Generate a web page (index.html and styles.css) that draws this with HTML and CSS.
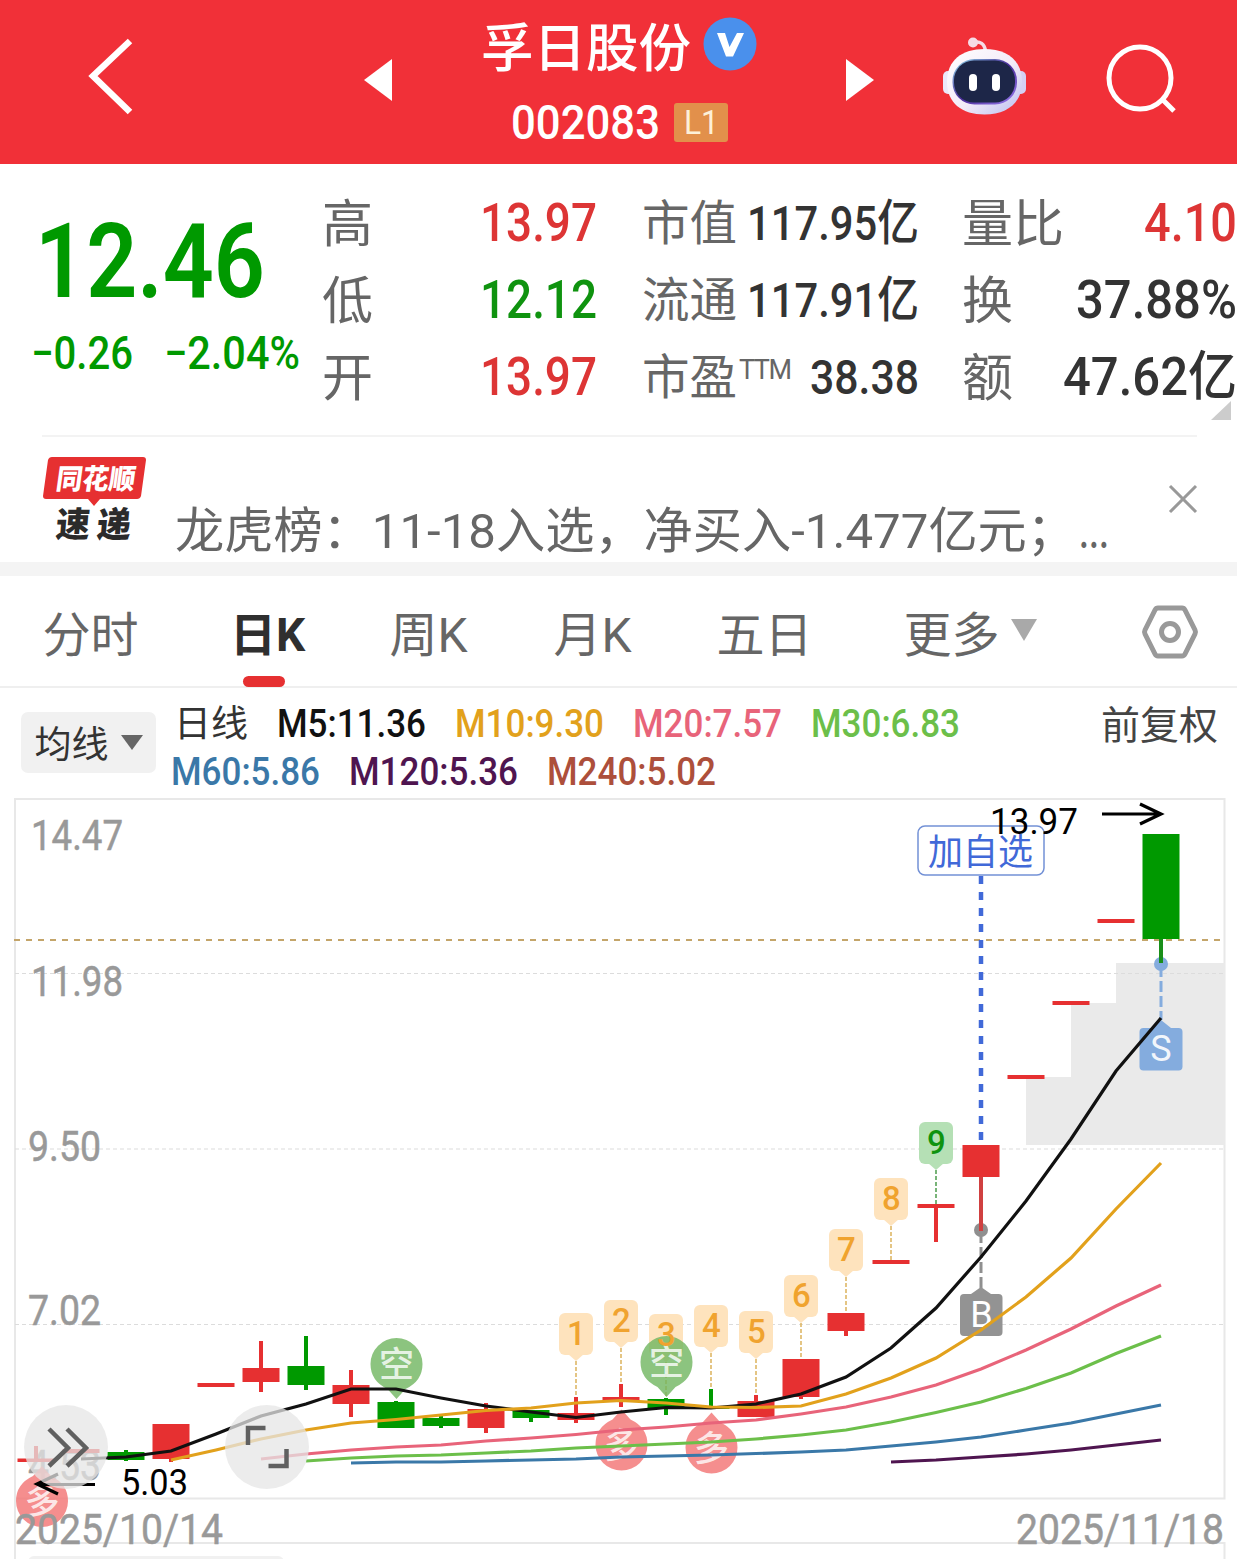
FILE: index.html
```html
<!DOCTYPE html>
<html lang="zh-CN">
<head>
  <meta charset="UTF-8" />
  <title>孚日股份 002083</title>
  <link rel="stylesheet" href="styles.css">
</head>
<body>

  <header class="topbar">
    <svg class="back" width="60" height="90" viewBox="0 0 60 90">
      <path d="M49 9 L12 44 L49 80" />
    </svg>
    <svg class="prev" width="28" height="42" viewBox="0 0 28 42"><path d="M28 0 V42 L0 21 Z" /></svg>
    <div class="stock">
      <div class="stock-name">
        <span>孚日股份</span>
        <svg width="54" height="54" viewBox="0 0 54 54">
          <circle cx="27" cy="27" r="26.500" fill="#4a90ec" />
          <path d="M14 16 H22 L26.500 30 L34 16 H41 L30 39.500 H23 Z" fill="#fff" />
        </svg>
      </div>
      <div class="stock-code">
        <span class="fit" data-w="149">002083</span>
        <span class="level"><span class="fit" data-w="35">L1</span></span>
      </div>
    </div>
    <svg class="next" width="28" height="42" viewBox="0 0 28 42"><path d="M0 0 V42 L28 21 Z" /></svg>
    <svg class="robot" width="88" height="80" viewBox="940 37 88 80">
      <defs>
        <linearGradient id="shell" x1="0" y1="0" x2="1" y2="1">
          <stop offset="0" stop-color="#fff" />
          <stop offset=".55" stop-color="#f3ebf8" />
          <stop offset="1" stop-color="#b9bdf0" />
        </linearGradient>
        <linearGradient id="rim" x1="0" y1="0" x2="1" y2="1">
          <stop offset="0" stop-color="#8fd8e8" />
          <stop offset=".5" stop-color="#4a2a9a" />
          <stop offset="1" stop-color="#9a7cf0" />
        </linearGradient>
      </defs>
      <path d="M973 42.500 Q984 40 985.500 51" fill="none" stroke="#f6dce6" stroke-width="3.500" />
      <circle cx="973" cy="42.500" r="5" fill="#f6dce6" />
      <rect x="943" y="71" width="12" height="23" rx="5" fill="#ebe8fa" />
      <rect x="1014" y="71" width="12" height="23" rx="5" fill="#d5d0f4" />
      <path d="M947 82 C947 60 962 49 984.500 49 C1007 49 1022 60 1022 82 C1022 103 1007 114.500 984.500 114.500 C962 114.500 947 103 947 82 Z" fill="url(#shell)" />
      <rect x="952.500" y="59" width="64.500" height="45.500" rx="22" fill="url(#rim)" />
      <rect x="954" y="60.500" width="61" height="42" rx="20" fill="#1d2648" />
      <rect x="969" y="74" width="8" height="17" rx="4" fill="#fff" />
      <rect x="992" y="74" width="8" height="17" rx="4" fill="#fff" />
    </svg>
    <svg class="search" width="76" height="76" viewBox="1103 40 76 76">
      <circle cx="1140" cy="78" r="31" />
      <path d="M1162 99 L1174 111" />
    </svg>
  </header>

  <section class="quote">
    <div class="price-box">
      <div class="price"><span class="fit" data-w="230">12.46</span></div>
      <div class="change"><span class="fit" data-w="102">−0.26</span><span class="fit" data-w="136">−2.04%</span></div>
    </div>
    <dl class="facts">
      <div class="fact"><dt>高</dt><dd class="up"><span class="fit" data-w="117">13.97</span></dd></div>
      <div class="fact"><dt>低</dt><dd class="down"><span class="fit" data-w="117">12.12</span></dd></div>
      <div class="fact"><dt>开</dt><dd class="up"><span class="fit" data-w="117">13.97</span></dd></div>
    </dl>
    <dl class="facts facts-mid">
      <div class="fact"><dt>市值</dt><dd><span class="fit" data-w="172">117.95亿</span></dd></div>
      <div class="fact"><dt>流通</dt><dd><span class="fit" data-w="172">117.91亿</span></dd></div>
      <div class="fact"><dt>市盈<sup>TTM</sup></dt><dd><span class="fit" data-w="109">38.38</span></dd></div>
    </dl>
    <dl class="facts facts-end">
      <div class="fact"><dt>量比</dt><dd class="up"><span class="fit" data-w="93">4.10</span></dd></div>
      <div class="fact"><dt>换</dt><dd><span class="fit" data-w="161">37.88%</span></dd></div>
      <div class="fact"><dt>额</dt><dd><span class="fit" data-w="174">47.62亿</span></dd></div>
    </dl>
    <svg class="corner" width="20" height="19" viewBox="0 0 20 19"><path d="M20 0 V19 H0 Z" /></svg>
  </section>

  <section class="news">
    <svg class="news-logo" width="104" height="90" viewBox="42 455 104 90">
      <path d="M52 457 H143 Q146 457 146 460 L141 496 Q140 499 137 499 H100 L94 506 L88 499 H46 Q43 499 43 496 L48 460 Q49 457 52 457 Z" fill="#e63031" />
      <text transform="translate(55 489) skewX(-8)" class="logo-top" textLength="79" lengthAdjust="spacingAndGlyphs">同花顺</text>
      <text transform="translate(55 537) skewX(-5)" class="logo-bottom" textLength="34" lengthAdjust="spacingAndGlyphs">速</text>
      <text transform="translate(96 537) skewX(-5)" class="logo-bottom" textLength="34" lengthAdjust="spacingAndGlyphs">递</text>
    </svg>
    <p class="news-text"><span class="fit" data-w="901">龙虎榜：11-18入选，净买入-1.477亿元；</span><span class="fit dots" data-w="30">...</span></p>
    <svg class="close" width="30" height="30" viewBox="0 0 30 30"><path d="M2 2 L28 28 M28 2 L2 28" /></svg>
  </section>

  <nav class="tabs">
    <a class="tab">分时</a>
    <a class="tab active">日K</a>
    <a class="tab">周K</a>
    <a class="tab">月K</a>
    <a class="tab">五日</a>
    <a class="tab">更多<svg width="26" height="22" viewBox="0 0 26 22"><path d="M0 0 H26 L13 22 Z" fill="#a9a9a9" /></svg></a>
    <svg class="settings" width="58" height="56" viewBox="0 0 58 56">
      <path d="M17 4 H41 Q43 4 44 6 L54 26 Q55 28 54 30 L44 50 Q43 52 41 52 H17 Q15 52 14 50 L4 30 Q3 28 4 26 L14 6 Q15 4 17 4 Z" />
      <circle cx="29" cy="28" r="8.500" />
    </svg>
  </nav>

  <section class="averages">
    <button class="picker">均线<svg width="22" height="15" viewBox="0 0 22 15"><path d="M0 0 H22 L11 15 Z" fill="#666" /></svg></button>
    <div class="legend">
      <div class="legend-row">
        <span class="period">日线</span>
        <span class="fit m5" data-w="149">M5:11.36</span>
        <span class="fit m10" data-w="149">M10:9.30</span>
        <span class="fit m20" data-w="149">M20:7.57</span>
        <span class="fit m30" data-w="149">M30:6.83</span>
      </div>
      <div class="legend-row legend-long">
        <span class="fit m60" data-w="149">M60:5.86</span>
        <span class="fit m120" data-w="169">M120:5.36</span>
        <span class="fit m240" data-w="169">M240:5.02</span>
      </div>
    </div>
    <span class="adjust">前复权</span>
  </section>

  <svg class="chart" width="1237" height="761" viewBox="0 798 1237 761">
    <!-- frame and grid -->
    <g class="frame">
      <path d="M15 1559 V799 H1224.500 V1498.500 H15 M15 1543 H1224.500 V1559" />
    </g>
    <rect x="28" y="1556" width="256" height="12" rx="6" fill="#f1f1f1" />
    <path d="M1026 1145 V1077 H1071 V1003 H1116 V963 H1225 V1145 Z" fill="#eaeaea" />
    <path class="grid" d="M15 973.500 H1224 M15 1149 H1224 M15 1324.500 H1224" />
    <path class="last" d="M14 940 H1222" />

    <!-- price axis -->
    <g class="axis">
      <text x="31" y="850" textLength="92">14.47</text>
      <text x="31" y="996" textLength="92">11.98</text>
      <text x="28" y="1161" textLength="73">9.50</text>
      <text x="28" y="1325" textLength="73">7.02</text>
      <text x="28" y="1480" textLength="73">4.53</text>
    </g>

    <g id="markers"></g>
    <g id="candles"></g>
    <g id="signals"></g>
    <g id="counts"></g>

    <!-- trade marks -->
    <path d="M981 876 V1142" stroke="#4169d8" stroke-width="4.500" stroke-dasharray="8 8" />
    <circle cx="981" cy="1230" r="7" fill="#8f8f8f" />
    <path d="M981 1177 V1231" stroke="#d04040" stroke-width="4" />
    <path d="M981 1232 V1288" stroke="#8f8f8f" stroke-width="3" stroke-dasharray="11 4" />
    <path d="M971 1294 L981 1287 L991 1294 Z" fill="#939393" />
    <rect x="960" y="1294" width="42.500" height="42" rx="4" fill="#939393" />
    <text class="mark" x="981.500" y="1327">B</text>
    <circle cx="1161" cy="964" r="7" fill="#84acde" />
    <path d="M1161 939 V963" stroke="#1a8f1a" stroke-width="4" />
    <path d="M1161 966 V1020" stroke="#84acde" stroke-width="3" stroke-dasharray="11 4" />
    <path d="M1152 1028 L1161 1020 L1171 1028 Z" fill="#84acde" />
    <rect x="1139.500" y="1028" width="43" height="42.500" rx="4" fill="#84acde" />
    <text class="mark" x="1161" y="1061" opacity=".9">S</text>

    <g id="lines"></g>

    <!-- high, low and watchlist labels -->
    <rect x="918" y="826" width="126" height="49" rx="7" fill="#fff" stroke="#7391d6" stroke-width="1.500" />
    <text class="watch" x="928" y="865" textLength="105">加自选</text>
    <text class="extreme" x="990" y="834" textLength="88">13.97</text>
    <path class="arrow" d="M1102 814 H1160 M1140 804 L1161 814 L1140 824" />
    <text class="extreme" x="121" y="1495" textLength="67">5.03</text>
    <path class="arrow" d="M95 1484.500 H37 M58 1474 L37 1484 L58 1494" />

    <!-- floating buttons -->
    <circle cx="66" cy="1447" r="42" fill="#e6e6e6" opacity=".75" />
    <path class="tool" d="M49 1429 L68 1448 L49 1466 M67 1429 L86 1448 L67 1466" />
    <circle cx="267" cy="1447" r="42" fill="#e6e6e6" opacity=".75" />
    <path class="tool" d="M265.500 1428 H248 V1445 M268.500 1466 H286.500 V1449" />

    <g class="dates">
      <text x="15" y="1544" textLength="208">2025/10/14</text>
      <text x="1016" y="1544" textLength="208">2025/11/18</text>
    </g>
  </svg>

  <script src="chart.js"></script>
</body>
</html>
```

FILE: styles.css
```css
* {
  box-sizing: border-box;
}

body {
  margin: 0;
  width: 1237px;
  height: 1559px;
  overflow: hidden;
  background: #fff;
  color: #333;
  font-family: Roboto, "Noto Sans CJK SC", sans-serif;
}

svg {
  display: block;
  flex: none;
}

.fit {
  display: inline-block;
  white-space: nowrap;
  transform-origin: 0 50%;
}

/* Top bar */
.topbar {
  display: flex;
  height: 163.500px;
  background: #f13038;
  color: #fff;
}

.back {
  margin: 32px 0 0 81px;
  fill: none;
  stroke: #fff;
  stroke-width: 6.500;
}

.prev, .next {
  fill: #fff;
  margin-top: 59px;
}

.prev {
  margin-left: 223px;
}

.stock {
  width: 454px;
  display: flex;
  flex-direction: column;
  align-items: center;
}

.stock-name {
  display: flex;
  align-items: center;
  gap: 12px;
  height: 60px;
  margin-top: 14px;
  font-size: 52.500px;
  font-weight: 500;
}

.stock-code {
  display: flex;
  align-items: center;
  gap: 14px;
  height: 60px;
  margin-top: 18px;
  padding-left: 1px;
  font-size: 49px;
  font-weight: 500;
}

.level {
  display: flex;
  align-items: center;
  justify-content: center;
  width: 54px;
  height: 39px;
  border-radius: 3px;
  background: #e2904b;
  color: #fdf0d8;
  font-size: 33px;
  font-weight: 400;
}

.robot {
  margin: 37px 0 0 66px;
}

.search {
  margin: 40px 0 0 75px;
  fill: none;
  stroke: #fff;
  stroke-width: 5;
}

/* Quote */
.quote {
  display: flex;
  position: relative;
  height: 271.500px;
  padding-top: 21px;
}

.price-box {
  width: 322px;
  color: #009900;
  font-weight: 500;
}

.price {
  height: 138px;
  padding: 8px 0 0 35px;
  line-height: 138px;
  font-size: 104px;
  font-weight: 600;
}

.change {
  display: flex;
  gap: 31px;
  padding-left: 31px;
  font-size: 46px;
  line-height: 60px;
}

.facts {
  width: 275px;
  margin: 0 45px 0 0;
}

.facts-mid {
  width: 277px;
  margin-right: 43px;
}

.facts-end {
  margin: 0;
}

.fact {
  display: flex;
  justify-content: space-between;
  height: 77px;
  line-height: 77px;
}

.fact dt {
  padding-top: 1px;
  font-size: 51px;
  color: #666;
  white-space: nowrap;
}

.fact dd {
  margin: 0;
  font-size: 53px;
  font-weight: 500;
}

.facts-mid dt {
  font-size: 47.500px;
}

.facts-mid dd {
  font-size: 49px;
}

.fact sup {
  font-size: 27px;
  line-height: 0;
  letter-spacing: -1.500px;
  margin-left: 2px;
  vertical-align: 15px;
}

.up {
  color: #dd3535;
}

.down {
  color: #0f930f;
}

.corner {
  position: absolute;
  right: 6px;
  bottom: 15px;
  fill: #ccc;
}

/* News strip */
.news {
  display: flex;
  position: relative;
  height: 140.500px;
  padding-left: 42px;
  border-bottom: 14px solid #f4f4f4;
}

.news::before {
  content: "";
  position: absolute;
  left: 42px;
  right: 40px;
  top: 0;
  height: 2px;
  background: #f3f3f3;
}

.news-logo {
  margin-top: 20px;
}

.logo-top {
  font-size: 28px;
  font-weight: 900;
  fill: #fff;
}

.logo-bottom {
  font-size: 35px;
  font-weight: 900;
  fill: #2b2b2b;
}

.news-text {
  width: 935px;
  margin: 62px 0 0 29px;
  font-size: 49px;
  line-height: 70px;
  color: #666;
  white-space: nowrap;
}

.dots {
  margin-left: 3px;
  font-weight: 500;
}

.close {
  margin: 49px 0 0 58px;
  fill: none;
  stroke: #999;
  stroke-width: 3;
}

/* Period tabs */
.tabs {
  display: flex;
  height: 112px;
  padding-left: 42px;
  border-bottom: 2px solid #efefef;
}

.tab {
  display: flex;
  flex: none;
  position: relative;
  align-items: center;
  justify-content: center;
  width: 97px;
  height: 111px;
  margin-right: 67px;
  font-size: 48px;
  color: #666;
  white-space: nowrap;
}

.tab:nth-child(2) {
  width: 75px;
  margin: 0 84px 0 24px;
}

.tab:nth-child(3), .tab:nth-child(4) {
  width: 79px;
  margin-right: 85px;
}

.tab:nth-child(5) {
  width: 97px;
  margin: 0 90px 0 -1px;
}

.tab:nth-child(6) {
  width: 134px;
  gap: 11px;
  margin-right: 104px;
}

.tab:nth-child(6) svg {
  margin-top: -2px;
}

.active {
  color: #2f2f2f;
  font-size: 46px;
  font-weight: 700;
}

.active::after {
  content: "";
  position: absolute;
  left: 13px;
  bottom: 0;
  width: 42px;
  height: 11px;
  border-radius: 6px;
  background: #e63031;
}

.settings {
  margin-top: 28px;
  fill: none;
  stroke: #999;
  stroke-width: 5;
}

/* Moving averages */
.averages {
  display: flex;
  height: 110.500px;
  padding: 0 19px 0 21px;
}

.picker {
  display: flex;
  align-items: center;
  justify-content: center;
  gap: 12px;
  width: 135px;
  height: 61px;
  margin: 24px 18px 0 0;
  padding: 0;
  border: none;
  border-radius: 7px;
  background: #f1f1f1;
  color: #333;
  font: 37px "Noto Sans CJK SC", sans-serif;
}

.legend {
  flex: 1;
  padding-top: 12px;
  font-size: 39px;
  font-weight: 500;
}

.legend-row {
  display: flex;
  gap: 29px;
  height: 48px;
  line-height: 48px;
}

.legend-long {
  margin-left: -3px;
}

.period {
  padding-top: 1px;
  font-size: 37px;
  font-weight: 400;
}

.adjust {
  margin-top: 14px;
  font-size: 39px;
  line-height: 48px;
  color: #444;
}

.m5 { color: #111; }
.m10 { color: #e2a11c; }
.m20 { color: #e8647a; }
.m30 { color: #6cbf4a; }
.m60 { color: #3a78a8; }
.m120 { color: #4f1550; }
.m240 { color: #ad4f3b; }

/* Chart */
.frame {
  fill: none;
  stroke: #e8e8e8;
  stroke-width: 2;
}

.grid {
  stroke: #dcdcdc;
  stroke-width: 1.200;
  stroke-dasharray: 4 3;
}

.last {
  stroke: #c4a56a;
  stroke-width: 1.800;
  stroke-dasharray: 6 6;
}

.axis, .dates {
  font-size: 42px;
  fill: #999;
  stroke: #999;
  stroke-width: .5;
}

.mark {
  font-size: 36px;
  fill: #fff;
  text-anchor: middle;
}

.watch {
  font-size: 36px;
  fill: #4169d8;
}

.extreme {
  font-size: 36px;
  fill: #000;
}

.arrow {
  fill: none;
  stroke: #000;
  stroke-width: 3.200;
}

.tool {
  fill: none;
  stroke: #606060;
  stroke-width: 4.500;
}

.tag {
  font-size: 33px;
  font-weight: 500;
  text-anchor: middle;
}

.signal {
  font-size: 35px;
  font-weight: 500;
  fill: #fff;
  fill-opacity: .8;
  text-anchor: middle;
}

.line {
  fill: none;
  stroke-width: 3.200;
}
```

FILE: chart.js
```javascript
const NS = 'http://www.w3.org/2000/svg';
const RED = '#e63031';
const GREEN = '#009900';
const FIRST = 36;
const STEP = 45;

// Stretch each figure to its column width
document.querySelectorAll('.fit').forEach(el => {
  const width = Number(el.dataset.w);
  const natural = el.getBoundingClientRect().width;
  el.style.transform = `scaleX(${width / natural})`;
  el.style.marginRight = `${width - natural}px`;
});

document.querySelectorAll('.chart text[textLength]').forEach(el => {
  el.setAttribute('lengthAdjust', 'spacingAndGlyphs');
});

function add(parent, name, attrs, text) {
  const el = document.createElementNS(NS, name);
  for (const key in attrs) el.setAttribute(key, attrs[key]);
  if (text) el.textContent = text;
  parent.appendChild(el);
}

// color, body top, body bottom, wick top, wick bottom
const candles = [
  [RED, 1458.5, 1462, 1446, 1461],
  [RED, 1449, 1453, 1449, 1453],
  [GREEN, 1452, 1460, 1450, 1461],
  [RED, 1424, 1459, 1424, 1462],
  [RED, 1383, 1387, 1383, 1387],
  [RED, 1368, 1382, 1341, 1392],
  [GREEN, 1366, 1385, 1336, 1390],
  [RED, 1385, 1404, 1370, 1417],
  [GREEN, 1402, 1428, 1401, 1428],
  [GREEN, 1418, 1426, 1415, 1428],
  [RED, 1409, 1428, 1403, 1433],
  [GREEN, 1410, 1418, 1410, 1422],
  [RED, 1413, 1420, 1397, 1423],
  [RED, 1397, 1401, 1384, 1407],
  [GREEN, 1399, 1408, 1398, 1415],
  [GREEN, 1406, 1409, 1389, 1408],
  [RED, 1401, 1417, 1395, 1417],
  [RED, 1359, 1397, 1359, 1399],
  [RED, 1313, 1331, 1313, 1336],
  [RED, 1260, 1264, 1260, 1264],
  [RED, 1204, 1208, 1204, 1242],
  [RED, 1145, 1177, 1145, 1229],
  [RED, 1075, 1079, 1075, 1079],
  [RED, 1001, 1005, 1001, 1005],
  [RED, 919, 923, 919, 923],
  [GREEN, 834, 939, 834, 963]
];

const candleLayer = document.getElementById('candles');
candles.forEach(([color, top, bottom, high, low], i) => {
  const x = FIRST + i * STEP;
  add(candleLayer, 'rect', { x: x - 2, y: high, width: 4, height: low - high, fill: color });
  add(candleLayer, 'rect', { x: x - 18.5, y: top, width: 37, height: bottom - top, fill: color });
});

// Nine-count tags: label, candle index, tag top, stem end
const tags = [
  ['1', 12, 1313, 1397], ['2', 13, 1300, 1384], ['3', 14, 1314, 1398],
  ['4', 15, 1305, 1389], ['5', 16, 1311, 1395], ['6', 17, 1275, 1359],
  ['7', 18, 1229, 1313], ['8', 19, 1178, 1261], ['9', 20, 1122, 1205]
];
const markerLayer = document.getElementById('markers');
const countLayer = document.getElementById('counts');
tags.forEach(([label, i, y, end]) => {
  const x = FIRST + i * STEP;
  const nine = label === '9';
  const fill = nine ? '#b5e0b5' : '#fee3bd';
  const ink = nine ? '#0f930f' : '#f0a32f';
  add(markerLayer, 'path', { d: `M${x} ${y + 48} V${end}`, stroke: nine ? '#4c9c4c' : '#dcb25c', 'stroke-width': 1.5, 'stroke-dasharray': '4 2' });
  add(markerLayer, 'rect', { x: x - 17, y, width: 34, height: 42, rx: 6, fill });
  add(markerLayer, 'path', { d: `M${x - 8} ${y + 41} L${x} ${y + 48} L${x + 8} ${y + 41} Z`, fill });
  add(countLayer, 'text', { class: 'tag', x: x + 0.5, y: y + 32, fill: ink }, label);
});

// Long / short balloons: label, x, center y, color, pointer direction
const signals = [
  ['空', 396.5, 1364, '#6fb55f', 1],
  ['空', 666.5, 1362, '#6fb55f', 1],
  ['多', 621.5, 1444.5, '#f27272', -1],
  ['多', 711.5, 1447.5, '#f27272', -1],
  ['多', 42, 1501, '#f27272', -1]
];
const signalLayer = document.getElementById('signals');
signals.forEach(([label, x, y, fill, dir]) => {
  add(signalLayer, 'path', {
    d: `M${x - 26} ${y} A26 26 0 0 ${dir > 0 ? 1 : 0} ${x + 26} ${y} Q${x + 26} ${y + dir * 17} ${x + 9} ${y + dir * 25} L${x} ${y + dir * 35} L${x - 9} ${y + dir * 25} Q${x - 26} ${y + dir * 17} ${x - 26} ${y} Z`,
    fill, opacity: 0.8
  });
  add(signalLayer, 'text', { class: 'signal', x, y: y + 13 }, label);
});

// Moving averages: color, index of first candle, y per candle
const lines = [
  ['#111', 1, [1459, 1457, 1451, 1434, 1416, 1404, 1389, 1389, 1398, 1406, 1412, 1417.5, 1412, 1407.5, 1408, 1404, 1394, 1377, 1348, 1308, 1257, 1201, 1139, 1071, 1018]],
  ['#e2a11c', 3, [1460, 1450, 1439, 1430, 1423, 1419.5, 1415, 1410.5, 1408, 1403, 1400.5, 1403, 1407, 1407.5, 1406, 1394, 1378, 1358, 1330, 1297, 1258, 1209, 1163]],
  ['#e8647a', 5, [1459, 1454, 1450, 1447, 1445, 1441, 1438, 1434.5, 1430, 1427, 1423, 1420, 1414, 1407, 1397, 1385, 1369, 1350, 1329, 1306, 1285]],
  ['#6cbf4a', 6, [1461, 1458, 1456, 1455, 1453, 1451, 1448, 1446, 1444, 1442, 1439, 1435, 1430, 1422, 1412.5, 1402, 1388.5, 1373, 1353.5, 1336]],
  ['#3a78a8', 7, [1463, 1462, 1462, 1461, 1460, 1459, 1457, 1456, 1455, 1453.5, 1452, 1450, 1446, 1442, 1437, 1430, 1423, 1414, 1405]],
  ['#4f1550', 19, [1462, 1460, 1457, 1454, 1450, 1445, 1440]]
];
const lineLayer = document.getElementById('lines');
lines.forEach(([stroke, start, ys]) => {
  const points = ys.map((y, i) => `${FIRST + (start + i) * STEP},${y}`).join(' ');
  add(lineLayer, 'polyline', { class: 'line', points, stroke });
});
```
